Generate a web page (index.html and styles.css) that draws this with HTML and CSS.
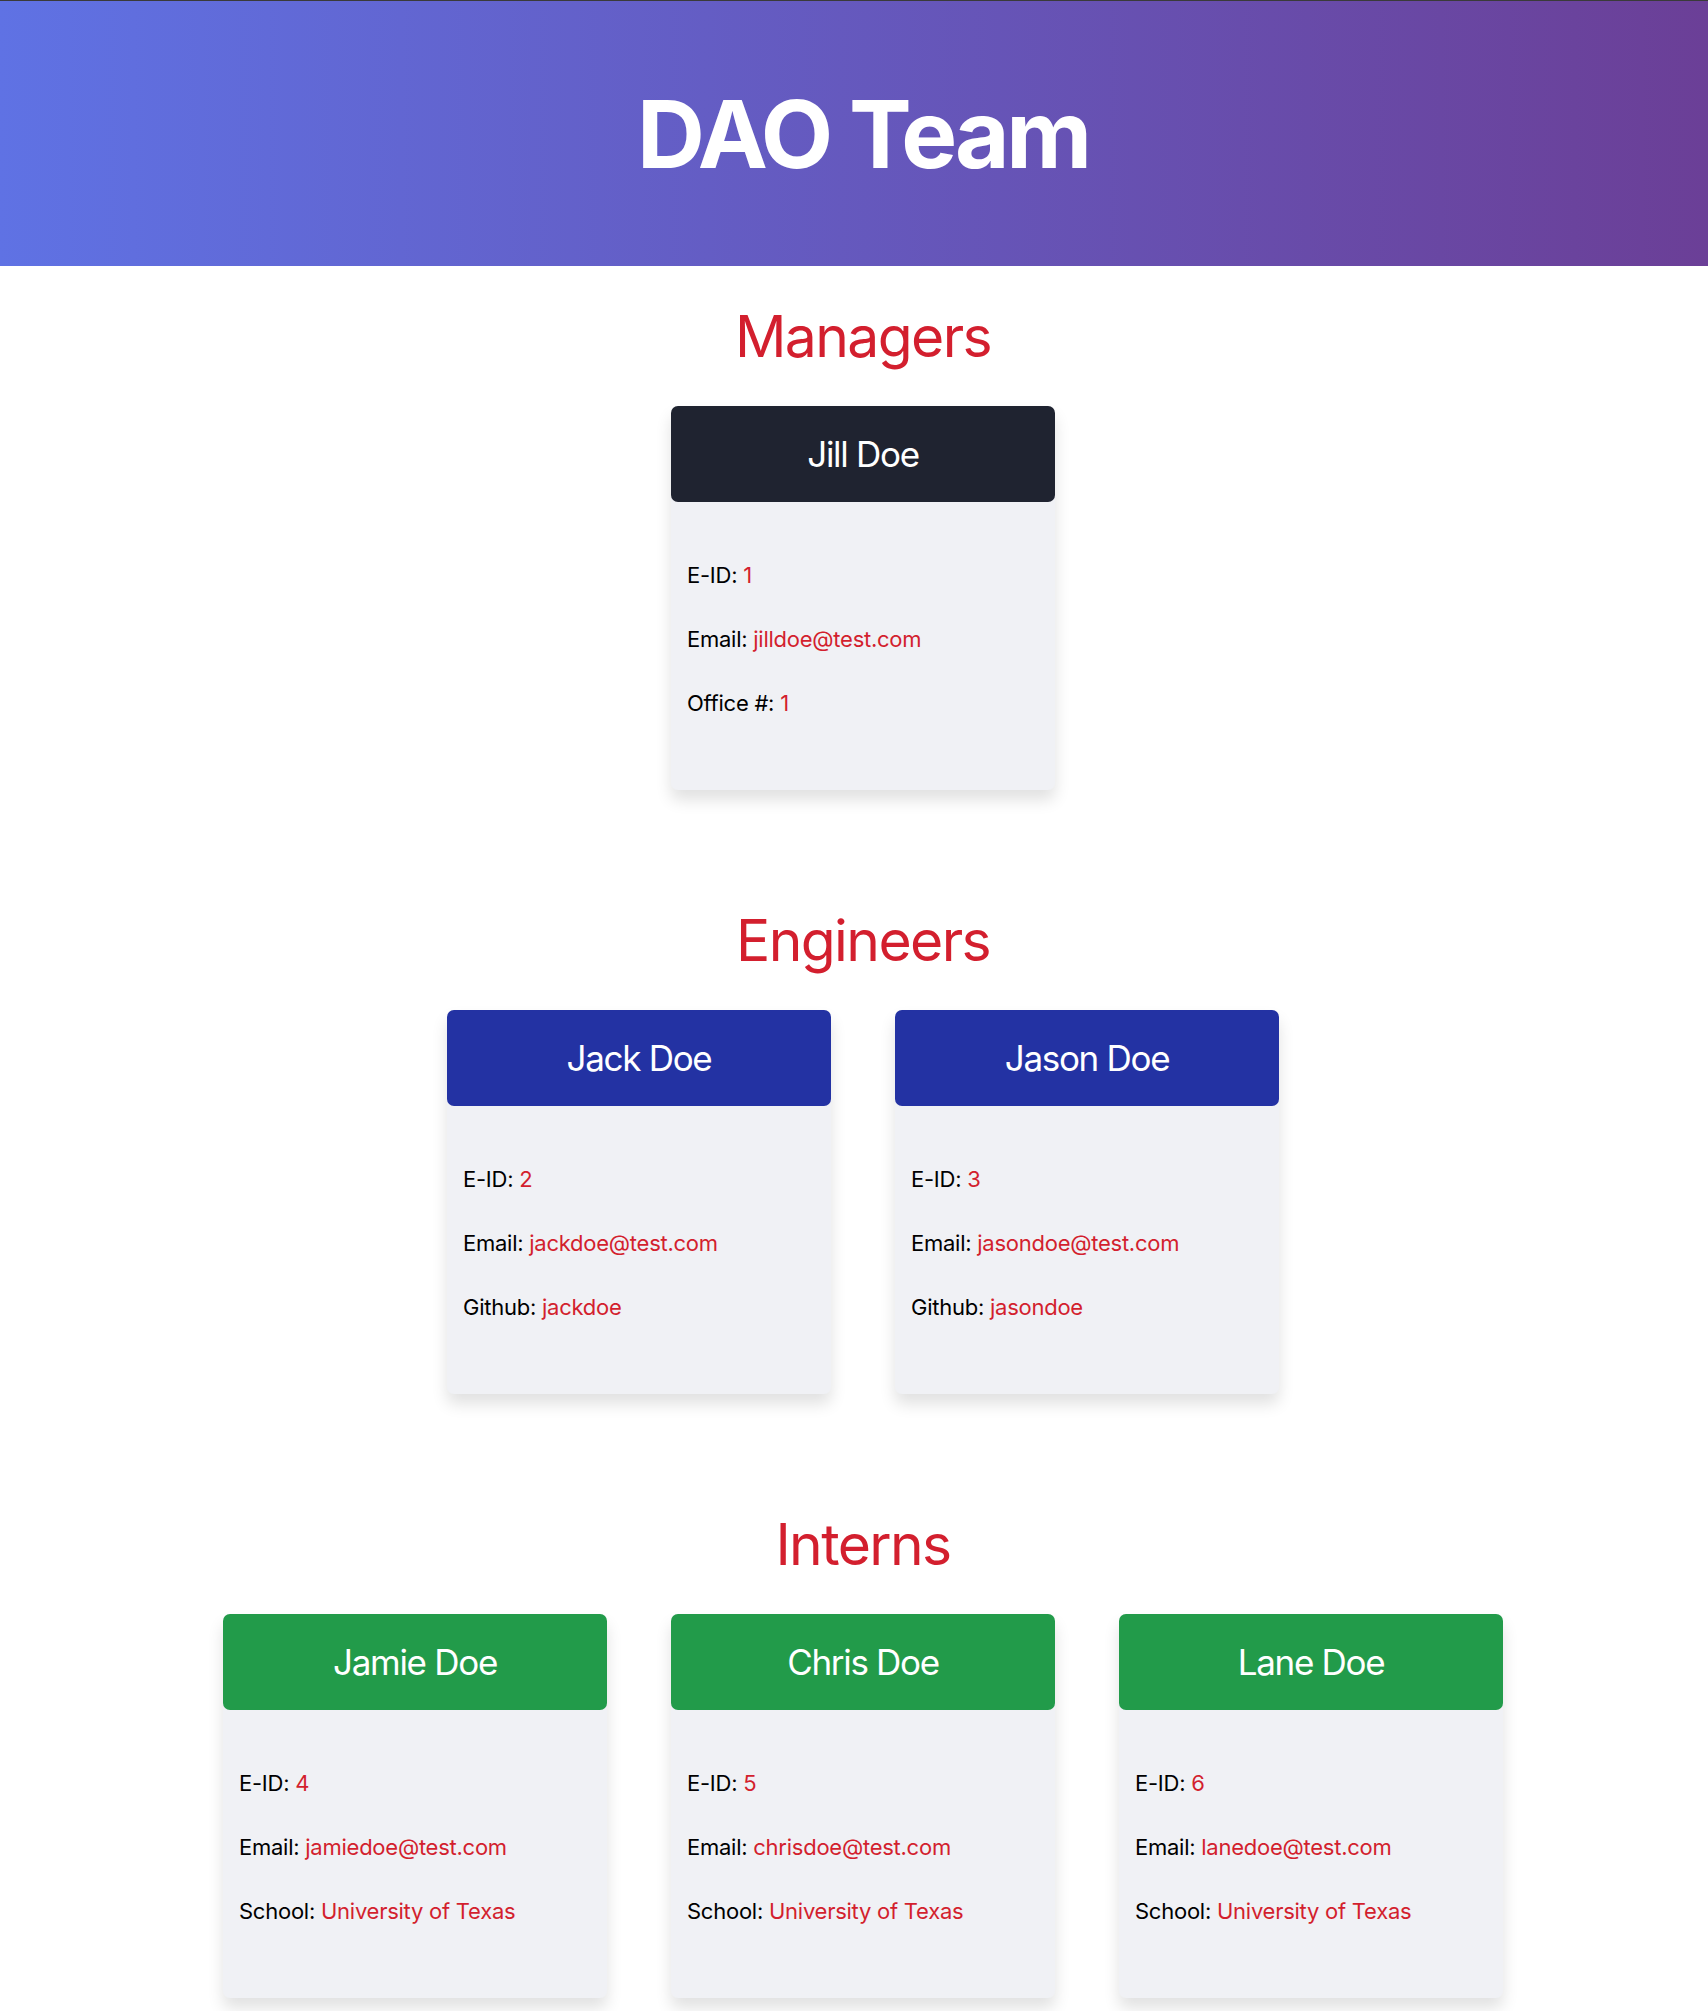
FILE: index.html
```html
<!DOCTYPE html>
<html lang="en">
<head>
<meta charset="UTF-8">
<title>DAO Team</title>
<link rel="stylesheet" href="styles.css">
</head>
<body>
<header class="hero">
  <h1 class="hero-title">DAO Team</h1>
</header>
<main class="content">
  <section class="group">
    <h2 class="group-title">Managers</h2>
    <div class="cards">
      <article class="card">
        <div class="card-head head-manager">Jill Doe</div>
        <div class="card-body">
          <p>E-ID: <span class="val">1</span></p>
          <p>Email: <span class="val">jilldoe@test.com</span></p>
          <p>Office #: <span class="val">1</span></p>
        </div>
      </article>
    </div>
  </section>
  <section class="group">
    <h2 class="group-title">Engineers</h2>
    <div class="cards">
      <article class="card">
        <div class="card-head head-engineer">Jack Doe</div>
        <div class="card-body">
          <p>E-ID: <span class="val">2</span></p>
          <p>Email: <span class="val">jackdoe@test.com</span></p>
          <p>Github: <span class="val">jackdoe</span></p>
        </div>
      </article>
      <article class="card">
        <div class="card-head head-engineer">Jason Doe</div>
        <div class="card-body">
          <p>E-ID: <span class="val">3</span></p>
          <p>Email: <span class="val">jasondoe@test.com</span></p>
          <p>Github: <span class="val">jasondoe</span></p>
        </div>
      </article>
    </div>
  </section>
  <section class="group">
    <h2 class="group-title">Interns</h2>
    <div class="cards">
      <article class="card">
        <div class="card-head head-intern">Jamie Doe</div>
        <div class="card-body">
          <p>E-ID: <span class="val">4</span></p>
          <p>Email: <span class="val">jamiedoe@test.com</span></p>
          <p>School: <span class="val">University of Texas</span></p>
        </div>
      </article>
      <article class="card">
        <div class="card-head head-intern">Chris Doe</div>
        <div class="card-body">
          <p>E-ID: <span class="val">5</span></p>
          <p>Email: <span class="val">chrisdoe@test.com</span></p>
          <p>School: <span class="val">University of Texas</span></p>
        </div>
      </article>
      <article class="card">
        <div class="card-head head-intern">Lane Doe</div>
        <div class="card-body">
          <p>E-ID: <span class="val">6</span></p>
          <p>Email: <span class="val">lanedoe@test.com</span></p>
          <p>School: <span class="val">University of Texas</span></p>
        </div>
      </article>
    </div>
  </section>
</main>
</body>
</html>
```
FILE: styles.css
```css
* { box-sizing: border-box; }
html, body { margin: 0; padding: 0; }
html { overflow: hidden; }
body {
  font-family: Inter, "Noto Sans", "Liberation Sans", sans-serif;
  background: #ffffff;
  color: #000000;
}
.hero {
  height: 266px;
  padding-left: 18px;
  border-top: 1px solid #3a3a3a;
  background: linear-gradient(to right, #5f72e4, #6b3f97);
  display: flex;
  align-items: center;
  justify-content: center;
}
.hero-title {
  margin: 0;
  color: #ffffff;
  font-size: 94px;
  font-weight: 700;
  letter-spacing: -3.2px;
  line-height: 116px;
}
.content {
  padding-left: 18px;
}
.group {
  padding: 35px 0 80px;
}
.group:last-child { padding-bottom: 13px; }
.group-title {
  margin: 0 0 33px;
  text-align: center;
  color: #d31f2e;
  font-size: 57px;
  font-weight: 400;
  line-height: 72px;
  letter-spacing: -1.6px;
}
.cards {
  display: flex;
  justify-content: center;
  gap: 64px;
}
.card {
  width: 384px;
  height: 384px;
  background: #f0f1f5;
  border-radius: 7px;
  box-shadow: 0 10px 16px rgba(0, 0, 0, 0.12);
  display: flex;
  flex-direction: column;
}
.card-head {
  height: 96px;
  border-radius: 7px;
  color: #ffffff;
  font-size: 35px;
  display: flex;
  align-items: center;
  justify-content: center;
  letter-spacing: -1.3px;
}
.head-manager { background: #1f2330; }
.head-engineer { background: #2332a3; }
.head-intern { background: #229b4a; }
.card-body {
  padding: 55px 16px 0;
  font-size: 22px;
  line-height: 36px;
  letter-spacing: -0.25px;
}
.card-body p { margin: 0 0 28px; }
.val { color: #d31f2e; }
```
